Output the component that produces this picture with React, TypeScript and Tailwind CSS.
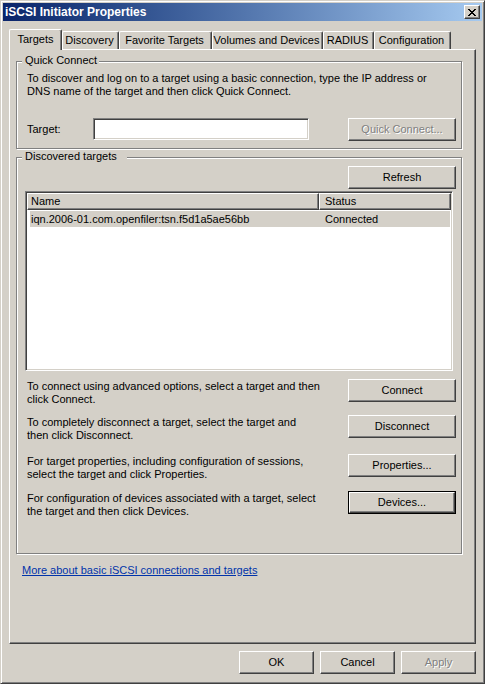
import React from 'react';

const raised =
  'border border-t-white border-l-white border-r-[#404040] border-b-[#404040] shadow-[inset_-1px_-1px_0_#808080]';
const sunken =
  'border border-t-[#808080] border-l-[#808080] border-r-white border-b-white shadow-[inset_1px_1px_0_#404040,inset_-1px_-1px_0_#d4d0c8]';
const etched = 'border border-[#808080] shadow-[inset_1px_1px_0_#fff,1px_1px_0_#fff]';

interface ButtonProps {
  label: string;
  className?: string;
  disabled?: boolean;
  isDefault?: boolean;
}

const Button: React.FC<ButtonProps> = ({ label, className = '', disabled, isDefault }) => {
  const text = disabled ? 'text-[#808080] [text-shadow:1px_1px_0_#fff]' : 'text-black';
  if (isDefault) {
    return (
      <div className={`border border-black shrink-0 ${className}`}>
        <div className={`w-full h-full flex items-center justify-center ${raised} ${text}`}>{label}</div>
      </div>
    );
  }
  return (
    <div className={`shrink-0 flex items-center justify-center ${raised} ${text} ${className}`}>{label}</div>
  );
};

interface GroupBoxProps {
  title: string;
  className?: string;
  titleClass?: string;
  children: React.ReactNode;
}

const GroupBox: React.FC<GroupBoxProps> = ({ title, className = '', titleClass = 'pr-[2px]', children }) => (
  <div className={`relative ${etched} ${className}`}>
    <span className={`absolute left-[5px] -top-[8px] bg-[#d4d0c8] pl-[3px] ${titleClass}`}>{title}</span>
    {children}
  </div>
);

const tabs = [
  { label: 'Targets', width: 'w-[53px]', active: true },
  { label: 'Discovery', width: 'w-[57px]' },
  { label: 'Favorite Targets', width: 'w-[93px]' },
  { label: 'Volumes and Devices', width: 'w-[111px]' },
  { label: 'RADIUS', width: 'w-[51px]' },
  { label: 'Configuration', width: 'w-[77px]' },
];

const actions = [
  {
    lines: ['To connect using advanced options, select a target and then', 'click Connect.'],
    button: 'Connect',
    gap: 'mt-[8px]',
  },
  {
    lines: ['To completely disconnect a target, select the target and', 'then click Disconnect.'],
    button: 'Disconnect',
    gap: 'mt-[9px]',
  },
  {
    lines: ['For target properties, including configuration of sessions,', 'select the target and click Properties.'],
    button: 'Properties...',
    gap: 'mt-[12px]',
  },
  {
    lines: ['For configuration of devices associated with a target, select', 'the target and then click Devices.'],
    button: 'Devices...',
    gap: 'mt-[10px]',
    isDefault: true,
  },
];

// Marlett-style close cross, drawn pixel by pixel
const closeCross = [
  '11000011',
  '01100110',
  '00111100',
  '00011000',
  '00111100',
  '01100110',
  '11000011',
];

const CloseIcon = () => (
  <svg width="8" height="7" viewBox="0 0 8 7" shapeRendering="crispEdges">
    {closeCross.map((row, y) =>
      row.split('').map((c, x) => (c === '1' ? <rect key={`${x}-${y}`} x={x} y={y} width="1" height="1" fill="#000" /> : null))
    )}
  </svg>
);

export default function App() {
  return (
    <div
      className={`w-[485px] h-[684px] bg-[#d4d0c8] p-[2px] border border-t-[#d4d0c8] border-l-[#d4d0c8] border-r-[#404040] border-b-[#404040] shadow-[inset_1px_1px_0_#fff,inset_-1px_-1px_0_#808080] text-[11px] leading-[13px] text-black font-['Liberation_Sans',Arial,sans-serif] select-none`}
    >
      {/* Title bar */}
      <div className="h-[18px] flex items-center bg-linear-to-r from-[#0a246a] to-[#a6caf0]">
        <span className="pl-[2px] text-white font-bold text-[12px]">iSCSI Initiator Properties</span>
        <div className={`ml-auto mr-[2px] w-[16px] h-[14px] bg-[#d4d0c8] flex items-center justify-center ${raised}`}>
          <CloseIcon />
        </div>
      </div>

      <div className="px-[6px]">
        {/* Tab strip */}
        <div className="mt-[8px] h-[20px] flex items-end relative z-10">
          {tabs.map((tab) =>
            tab.active ? (
              <div
                key={tab.label}
                className={`${tab.width} h-[21px] -mb-px bg-[#d4d0c8] flex items-center justify-center pb-[2px] border-l border-t border-r border-l-white border-t-white border-r-[#404040] shadow-[inset_-1px_0_0_#808080] rounded-t-[2px]`}
              >
                {tab.label}
              </div>
            ) : (
              <div
                key={tab.label}
                className={`${tab.width} h-[18px] flex items-center justify-center pr-[2px] border-l border-t border-r border-l-white border-t-white border-r-[#404040] shadow-[inset_-1px_0_0_#808080] rounded-t-[2px]`}
              >
                {tab.label}
              </div>
            )
          )}
        </div>

        {/* Tab page */}
        <div className={`h-[595px] ${raised}`}>
          <GroupBox title="Quick Connect" className="mt-[11px] ml-[6px] w-[446px] h-[88px]">
            <p className="mt-[10px] ml-[10px]">
              To discover and log on to a target using a basic connection, type the IP address or
              <br />
              DNS name of the target and then click Quick Connect.
            </p>
            <div className="mt-[20px] flex items-center h-[23px]">
              <span className="ml-[10px] w-[66px]">Target:</span>
              <div className={`w-[216px] h-[22px] self-start bg-white ${sunken}`} />
              <Button label="Quick Connect..." className="ml-[39px] w-[108px] h-[23px]" disabled />
            </div>
          </GroupBox>

          <GroupBox title="Discovered targets" titleClass="pr-[10px]" className="mt-[8px] ml-[6px] w-[446px] h-[397px]">
            <Button label="Refresh" className="mt-[8px] ml-[331px] w-[108px] h-[23px]" />

            <div className={`mt-[2px] ml-[8px] w-[428px] h-[180px] bg-white p-px ${sunken}`}>
              <div className="flex h-[17px] bg-[#d4d0c8]">
                <div className={`w-[292px] flex items-center pl-[3px] ${raised}`}>Name</div>
                <div className={`flex-1 flex items-center pl-[5px] ${raised}`}>Status</div>
              </div>
              <div className="mt-px ml-[3px] w-[420px] h-[16px] bg-[#d4d0c8] flex items-center">
                <span className="w-[295px] pl-px">iqn.2006-01.com.openfiler:tsn.f5d1a5ae56bb</span>
                <span>Connected</span>
              </div>
            </div>

            {actions.map((a) => (
              <div key={a.button} className={`${a.gap} ml-[10px] flex items-start`}>
                <p className="w-[321px] pt-px">
                  {a.lines[0]}
                  <br />
                  {a.lines[1]}
                </p>
                <Button label={a.button} className="w-[108px] h-[23px]" isDefault={a.isDefault} />
              </div>
            ))}
          </GroupBox>

          <a className="block mt-[10px] ml-[12px] w-fit text-[#0033aa] underline underline-offset-1 cursor-pointer">
            More about basic iSCSI connections and targets
          </a>
        </div>

        {/* Dialog buttons */}
        <div className="mt-[7px] flex justify-end gap-[6px]">
          <Button label="OK" className="w-[75px] h-[23px]" />
          <Button label="Cancel" className="w-[75px] h-[23px]" />
          <Button label="Apply" className="w-[75px] h-[23px]" disabled />
        </div>
      </div>
    </div>
  );
}
